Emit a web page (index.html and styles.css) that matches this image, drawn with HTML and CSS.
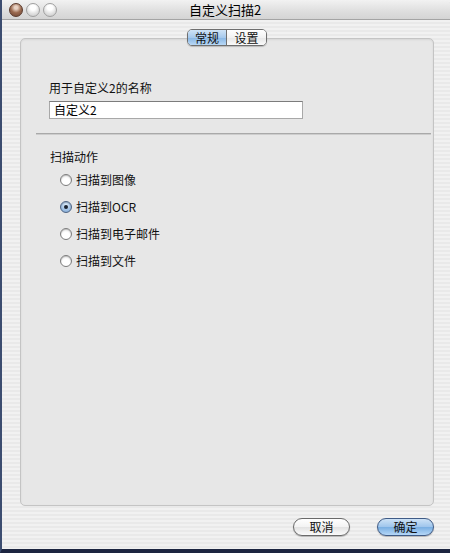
FILE: index.html
```html
<!DOCTYPE html>
<html>
<head lang="zh">
    <meta charset="UTF-8">
    <title>自定义扫描2</title>
    <link rel="stylesheet" href="styles.css">
</head>
<body>
    <div class="window">
        <div class="titlebar">
            <div class="lights">
                <span class="light close"></span>
                <span class="light"></span>
                <span class="light"></span>
            </div>
            <div class="title">自定义扫描2</div>
        </div>
        <div class="main">
            <div class="tabs">
                <span class="tab active">常规</span>
                <span class="tab">设置</span>
            </div>
            <div class="group">
                <div class="name-section">
                    <div class="label">用于自定义2的名称</div>
                    <div class="field">自定义2</div>
                </div>
                <div class="separator"></div>
                <div class="action-section">
                    <div class="label">扫描动作</div>
                    <div class="radios">
                        <div class="radio-row"><span class="radio"></span>扫描到图像</div>
                        <div class="radio-row"><span class="radio checked"></span>扫描到OCR</div>
                        <div class="radio-row"><span class="radio"></span>扫描到电子邮件</div>
                        <div class="radio-row"><span class="radio"></span>扫描到文件</div>
                    </div>
                </div>
            </div>
            <div class="buttons">
                <span class="button">取消</span>
                <span class="button default">确定</span>
            </div>
        </div>
    </div>
</body>
</html>
```

FILE: styles.css
```css
* {
    margin:0;
    padding:0;
    box-sizing: border-box;
}
body {
    font-family: "Noto Sans CJK SC", "Noto Sans", sans-serif;
    font-size: 12px;
    color: #111;
    background: #1c2540;
}
.window {
    width:450px;
    height:553px;
    display: flex;
    flex-direction: column;
    border-left: 2px solid #3c4d70;
    border-bottom: 4px solid #1c2540;
    background: repeating-linear-gradient(#f1f1f1 0 2px, #e9e9e9 2px 4px);
    overflow: hidden;
}
.titlebar {
    height: 20px;
    margin-left: -2px;
    display: flex;
    align-items: center;
    position: relative;
    background: linear-gradient(#f2f2f2, #dedede 60%, #d4d4d4);
    border-bottom: 1px solid #a4a4a4;
    border-radius: 5px 5px 0 0;
}
.lights {
    display: flex;
    gap: 3px;
    padding-left: 9px;
}
.light {
    width:14px;
    height:14px;
    border-radius: 50%;
    border: 1px solid #a0a0a0;
    background: radial-gradient(circle at 50% 30%, #ffffff 0 25%, #e0e0e0 60%, #c4c4c4);
}
.light.close {
    border-color: #5a3a2c;
    background: radial-gradient(circle at 50% 30%, #e8d2c4 0 15%, #9a6a50 50%, #6e4434);
}
.title {
    position: absolute;
    left: 0;
    right: 0;
    text-align: center;
    font-size: 13px;
    line-height: 20px;
    color: #000;
}
.main {
    flex: 1;
    display: flex;
    flex-direction: column;
    padding: 9px 16px 0 18px;
}
.tabs {
    align-self: center;
    display: flex;
    height: 17px;
    border: 1px solid #6f6f6f;
    border-radius: 5px;
    overflow: hidden;
    position: relative;
    z-index: 1;
    box-shadow: 0 1px 1px rgba(0,0,0,0.2);
}
.tab {
    width: 39px;
    text-align: center;
    line-height: 15px;
    font-size: 12px;
    background: linear-gradient(#ffffff, #f2f2f2 50%, #e6e6e6 51%, #fafafa);
}
.tab.active {
    width: 39px;
    border-right: 1px solid #6f6f6f;
    background: linear-gradient(#cfe3f6, #a6c9ec 50%, #87b5e3 51%, #b8d8f6);
}
.group {
    height: 468px;
    margin-top: -8px;
    border: 1px solid #c4c4c4;
    border-radius: 5px;
    background: #e7e7e7;
    box-shadow: inset 0 1px 2px rgba(0,0,0,0.08);
}
.label {
    line-height: 14px;
}
.name-section {
    padding: 42px 0 0 28px;
}
.field {
    width: 254px;
    height: 18px;
    margin-top: 6px;
    padding-left: 4px;
    line-height: 16px;
    background: #fff;
    border: 1px solid #a8a8a8;
    border-top-color: #7c7c7c;
    color: #000;
}
.separator {
    margin: 14px 2px 0 15px;
    height: 2px;
    border-top: 1px solid #a9a9a9;
    border-bottom: 1px solid #cdcdcd;
}
.action-section {
    padding: 15px 0 0 29px;
}
.radios {
    margin-top: 2px;
    padding-left: 10px;
}
.radio-row {
    height: 27px;
    display: flex;
    align-items: center;
    gap: 4px;
}
.radio {
    width: 12px;
    height: 12px;
    border-radius: 50%;
    border: 1px solid #7d7d7d;
    background: radial-gradient(circle at 50% 70%, #ffffff 0 40%, #e4e4e4 100%);
    box-shadow: inset 0 1px 1px rgba(0,0,0,0.2);
    display: flex;
    align-items: center;
    justify-content: center;
}
.radio.checked {
    border-color: #4f6584;
    background: radial-gradient(circle at 50% 30%, #e0edf9, #9fc0e4 60%, #7aa2d0);
}
.radio.checked::after {
    content: "";
    width: 4px;
    height: 4px;
    border-radius: 50%;
    background: #1a2330;
}
.buttons {
    display: flex;
    justify-content: flex-end;
    gap: 27px;
    margin-top: 12px;
}
.button {
    width: 57px;
    height: 18px;
    line-height: 16px;
    text-align: center;
    border: 1px solid #6a6a6a;
    border-radius: 9px;
    background: linear-gradient(#ffffff, #f3f3f3 50%, #e2e2e2 51%, #fbfbfb);
    box-shadow: 0 1px 1px rgba(0,0,0,0.25);
}
.button.default {
    border-color: #3f5b86;
    background: linear-gradient(#cde2f6, #9ec5ec 50%, #78aee2 51%, #b5d7f7);
}
```
